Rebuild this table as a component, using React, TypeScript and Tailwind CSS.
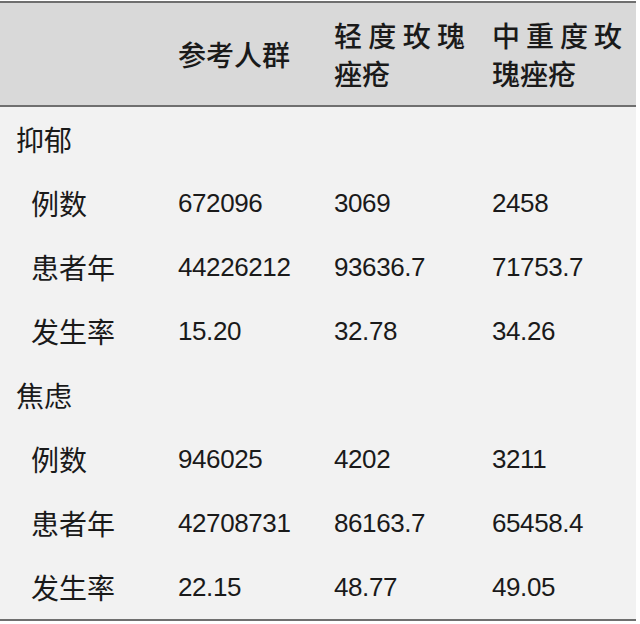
const cjk = "font-['Noto_Sans_CJK_SC',sans-serif]";
const num = "font-['Liberation_Sans','Noto_Sans_CJK_SC',sans-serif] tracking-[-0.4px]";

type Row = { label: string; values: string[] };

const groups: { title: string; rows: Row[] }[] = [
  {
    title: "抑郁",
    rows: [
      { label: "例数", values: ["672096", "3069", "2458"] },
      { label: "患者年", values: ["44226212", "93636.7", "71753.7"] },
      { label: "发生率", values: ["15.20", "32.78", "34.26"] },
    ],
  },
  {
    title: "焦虑",
    rows: [
      { label: "例数", values: ["946025", "4202", "3211"] },
      { label: "患者年", values: ["42708731", "86163.7", "65458.4"] },
      { label: "发生率", values: ["22.15", "48.77", "49.05"] },
    ],
  },
];

export default function App() {
  return (
    <div className="w-[640px] h-[624px] bg-white pt-[1px]">
      <div className="w-[636px] border-t-2 border-b-2 border-[#6f6f6f] bg-[#f2f2f2] text-[#1a1a1a]">
        {/* header */}
        <div className="grid grid-cols-[164px_156px_158px_158px] h-[104px] bg-[#d9d9d9] border-b-2 border-[#6f6f6f]">
          <div />
          <div className={`flex items-center pl-[14px] text-[28px] font-medium ${cjk}`}>参考人群</div>
          <div className={`flex items-center pl-[14px] pr-[13px] text-[28px] leading-[38px] font-medium text-justify ${cjk}`}>
            <span className="block w-full">轻度玫瑰痤疮</span>
          </div>
          <div className={`flex items-center pl-[14px] pr-[14px] text-[28px] leading-[38px] font-medium text-justify ${cjk}`}>
            <span className="block w-full">中重度玫瑰痤疮</span>
          </div>
        </div>

        {groups.map((g) => (
          <div key={g.title}>
            <div className={`h-[64px] flex items-center pl-[16px] text-[28px] ${cjk}`}>{g.title}</div>
            {g.rows.map((r) => (
              <div key={r.label} className="grid grid-cols-[164px_156px_158px_158px] h-[64px] items-center">
                <div className={`pl-[31px] text-[28px] ${cjk}`}>{r.label}</div>
                {r.values.map((v, i) => (
                  <div key={i} className={`pl-[14px] text-[26px] ${num}`}>
                    {v}
                  </div>
                ))}
              </div>
            ))}
          </div>
        ))}
      </div>
    </div>
  );
}
